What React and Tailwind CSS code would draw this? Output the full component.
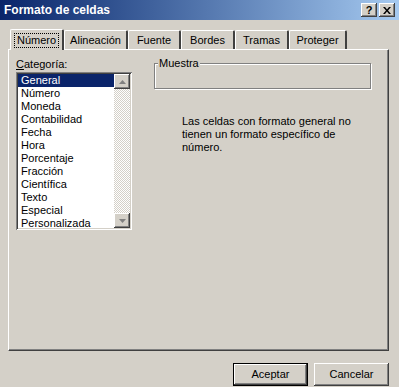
import React from 'react';

const raised = 'shadow-[inset_-1px_-1px_#404040,inset_1px_1px_#ffffff,inset_-2px_-2px_#808080,inset_2px_2px_#d4d0c8]';
const sunken = 'shadow-[inset_1px_1px_#808080,inset_-1px_-1px_#ffffff,inset_2px_2px_#404040,inset_-2px_-2px_#d4d0c8]';

const categories = ['General', 'Número', 'Moneda', 'Contabilidad', 'Fecha', 'Hora', 'Porcentaje', 'Fracción', 'Científica', 'Texto', 'Especial', 'Personalizada'];

const tabs = [
  { label: 'Número', w: 'w-[54px]' },
  { label: 'Alineación', w: 'w-[64px]' },
  { label: 'Fuente', w: 'w-[53px]' },
  { label: 'Bordes', w: 'w-[54px]' },
  { label: 'Tramas', w: 'w-[54px]' },
  { label: 'Proteger', w: 'w-[58px]' },
];

const CaptionButton = ({ children }) => (
  <div className={`w-[16px] h-[14px] bg-[#d4d0c8] ${raised} flex items-center justify-center text-black`}>
    {children}
  </div>
);

const Arrow = ({ up }) => (
  <svg width="7" height="4" viewBox="0 0 7 4">
    {up ? <path d="M3.5 0 L7 4 L0 4 Z" fill="#808080" /> : <path d="M0 0 L7 0 L3.5 4 Z" fill="#808080" />}
  </svg>
);

export default function App() {
  return (
    <div className="w-[399px] h-[387px] bg-[#d4d0c8] flex flex-col font-['Liberation_Sans',Tahoma,sans-serif] text-[11px] text-black overflow-hidden">
      {/* title bar */}
      <div className="h-[20px] flex items-center pl-[4px] pr-[4px] bg-gradient-to-r from-[#0a246a] to-[#a6caf0]">
        <span className="text-white font-bold text-[12px] flex-1">Formato de celdas</span>
        <div className="flex">
          <CaptionButton>
            <span className="font-bold text-[11px] leading-none">?</span>
          </CaptionButton>
          <div className="w-[2px]" />
          <CaptionButton>
            <svg width="8" height="7" viewBox="0 0 8 7">
              <path d="M0 0 L2 0 L4 2.5 L6 0 L8 0 L5 3.5 L8 7 L6 7 L4 4.5 L2 7 L0 7 L3 3.5 Z" fill="#000" />
            </svg>
          </CaptionButton>
        </div>
      </div>

      {/* tabs */}
      <div className="mt-[8px] pl-[10px] flex items-end h-[21px] relative z-10">
        {tabs.map((t, i) =>
          i === 0 ? (
            <div key={t.label} className={`${t.w} h-[21px] bg-[#d4d0c8] border-t border-l border-white border-r-2 border-r-[#404040] rounded-t-[2px] flex items-center justify-center -mb-[1px]`}>
              <span className="outline outline-1 outline-dotted outline-black px-[2px] leading-[13px]">{t.label}</span>
            </div>
          ) : (
            <div key={t.label} className={`${t.w} h-[19px] border-t border-l border-white border-r-2 border-r-[#404040] rounded-t-[2px] flex items-center justify-center`}>
              {t.label}
            </div>
          )
        )}
      </div>

      {/* panel */}
      <div className="mx-[8px] w-[381px] h-[302px] border-t border-l border-white border-r border-b border-r-[#404040] border-b-[#404040] shadow-[inset_-1px_-1px_#808080] flex pt-[7px] pl-[7px]">
        <div className="flex flex-col w-[116px]">
          <div className="h-[14px] leading-[14px]"><span className="underline">C</span>ategoría:</div>
          <div className={`mt-[1px] h-[158px] bg-white ${sunken} p-[2px] flex`}>
            <div className="flex-1 flex flex-col pl-[0px]">
              {categories.map((c, i) => (
                <div key={c} className={`h-[13px] leading-[13px] pl-[3px] ${i === 0 ? 'bg-[#0a246a] text-white' : ''}`}>{c}</div>
              ))}
            </div>
            <div className="w-[16px] flex flex-col bg-[repeating-conic-gradient(#ffffff_0_25%,#d4d0c8_0_50%)] bg-[length:2px_2px]">
              <div className={`h-[15px] bg-[#d4d0c8] ${raised} flex items-center justify-center`}><Arrow up /></div>
              <div className="flex-1" />
              <div className={`h-[15px] bg-[#d4d0c8] ${raised} flex items-center justify-center`}><Arrow /></div>
            </div>
          </div>
        </div>

        <div className="ml-[22px] flex flex-col">
          <div className="relative mt-[6px] w-[217px] h-[26px] border border-[#808080] shadow-[1px_1px_#ffffff,inset_1px_1px_#ffffff]">
            <span className="absolute -top-[8px] left-[3px] bg-[#d4d0c8] px-[1px] leading-[14px]">Muestra</span>
          </div>
          <div className="mt-[26px] ml-[28px] w-[175px] leading-[13px]">
            Las celdas con formato general no tienen un formato específico de número.
          </div>
        </div>
      </div>

      {/* buttons */}
      <div className="flex justify-end gap-[6px] mt-[12px] pr-[10px]">
        <div className="w-[75px] h-[23px] border border-black flex">
          <div className={`flex-1 bg-[#d4d0c8] ${raised} flex items-center justify-center`}>Aceptar</div>
        </div>
        <div className={`w-[75px] h-[23px] bg-[#d4d0c8] ${raised} flex items-center justify-center`}>Cancelar</div>
      </div>
    </div>
  );
}
